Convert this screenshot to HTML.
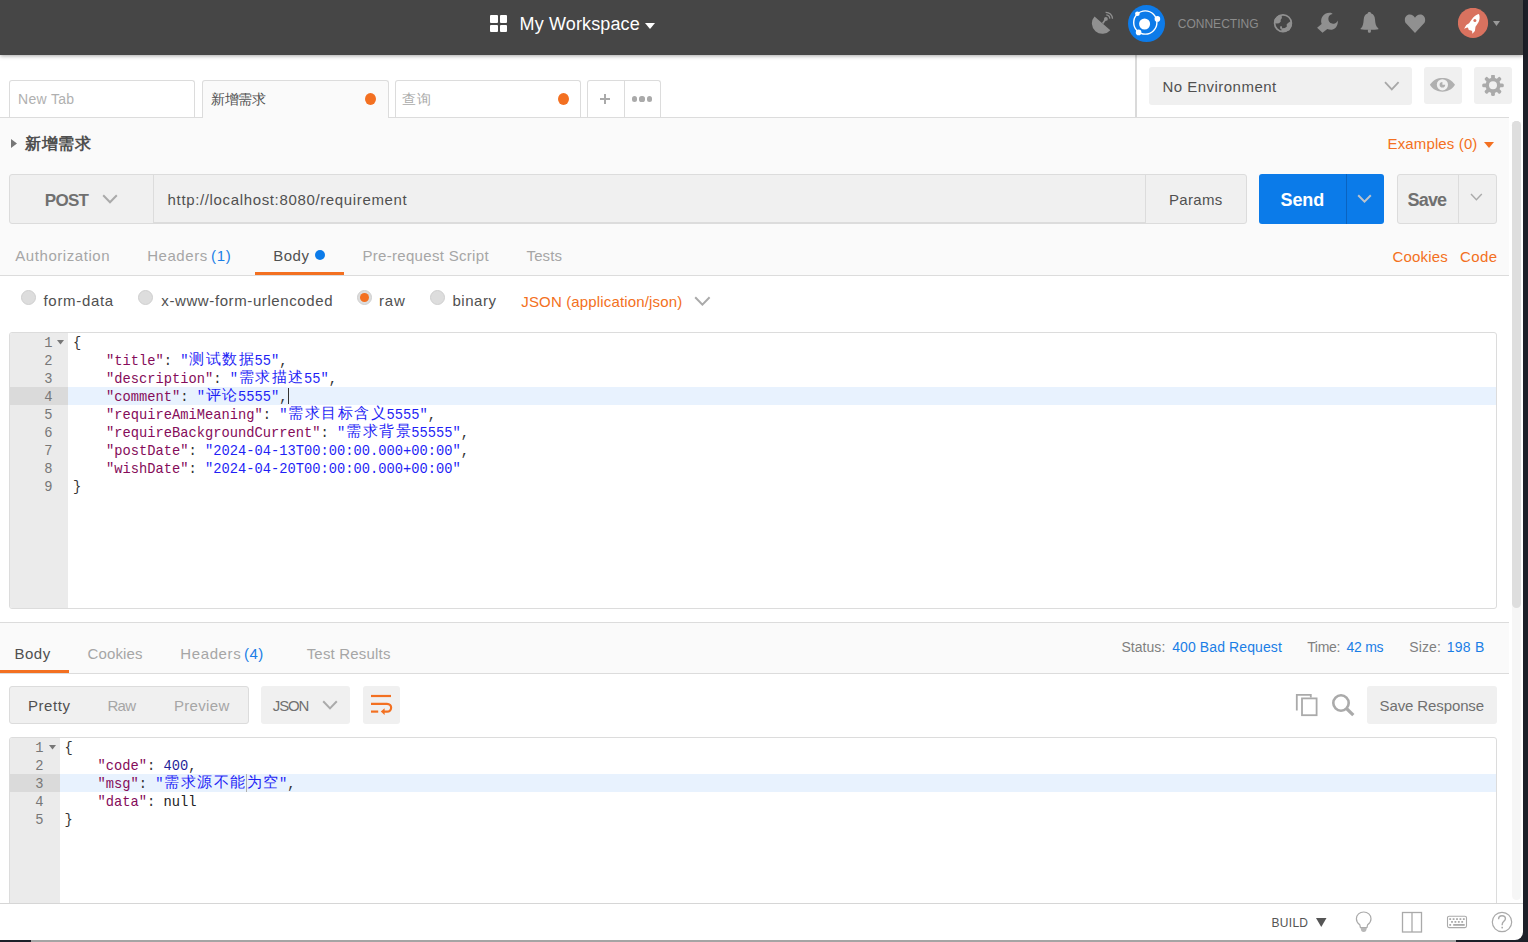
<!DOCTYPE html>
<html><head><meta charset="utf-8"><style>
html,body{margin:0;padding:0;width:1528px;height:942px;overflow:hidden;background:#fff;font-family:"Liberation Sans",sans-serif}
</style></head><body>
<div style="position:absolute;left:0px;top:0px;width:1528px;height:942px;background:#ffffff"></div><div style="position:absolute;left:1523px;top:0px;width:5px;height:942px;background:#1d2029"></div><div style="position:absolute;left:0px;top:0px;width:1523px;height:54.8px;background:#464646;box-shadow:0 1px 4px rgba(0,0,0,.35);z-index:2"></div><div style="position:absolute;left:490px;top:15px;width:7.5px;height:7.5px;background:#fff;border-radius:1px;z-index:3"></div><div style="position:absolute;left:499.5px;top:15px;width:7.5px;height:7.5px;background:#fff;border-radius:1px;z-index:3"></div><div style="position:absolute;left:490px;top:24.5px;width:7.5px;height:7.5px;background:#fff;border-radius:1px;z-index:3"></div><div style="position:absolute;left:499.5px;top:24.5px;width:7.5px;height:7.5px;background:#fff;border-radius:1px;z-index:3"></div><div style="position:absolute;left:519.60px;top:14.86px;font-family:'Liberation Sans', sans-serif;font-size:18px;font-weight:400;line-height:18px;letter-spacing:0.127px;white-space:pre;color:#ffffff;z-index:3">My Workspace</div><svg style="z-index:3;position:absolute;left:645px;top:23px" width="10" height="6" viewBox="0 0 10 6"><path d="M0 0H10L5 6Z" fill="#fff"/></svg><div style="position:absolute;left:1177.70px;top:17.84px;font-family:'Liberation Sans', sans-serif;font-size:12px;font-weight:400;line-height:12px;letter-spacing:0.022px;white-space:pre;color:#8c8c8c;z-index:3">CONNECTING</div><svg style="z-index:3;position:absolute;left:1090px;top:10px" width="26" height="26" viewBox="0 0 26 26"><path d="M4.5 6.4 L20.3 20.3 A10.5 10.5 0 0 1 4.5 6.4 Z" fill="#909090"/><path d="M12.6 13.4 L15.8 9" stroke="#909090" stroke-width="1.7"/><circle cx="15.9" cy="8.9" r="1.9" fill="#909090"/><path d="M16.3 4.9 A3.9 3.9 0 0 1 19.8 8.6" stroke="#909090" stroke-width="1.3" fill="none"/><path d="M15.6 2.3 A6.6 6.6 0 0 1 22.5 8.8" stroke="#909090" stroke-width="1.3" fill="none"/></svg><svg style="z-index:3;position:absolute;left:1128px;top:5px" width="38" height="38" viewBox="0 0 38 38"><circle cx="18.5" cy="18.6" r="18.5" fill="#0d7be9"/><circle cx="16.6" cy="19" r="5.5" fill="#fff"/><circle cx="17.3" cy="17.5" r="11.6" fill="none" stroke="#fff" stroke-width="1.4"/><circle cx="9.4" cy="8.7" r="2.3" fill="#fff"/><circle cx="29.4" cy="13.9" r="2.8" fill="#fff"/><circle cx="10.6" cy="27.4" r="2.8" fill="#fff"/></svg><svg style="z-index:3;position:absolute;left:1273px;top:13px" width="20" height="20" viewBox="0 0 20 20"><circle cx="10" cy="10.2" r="8.4" fill="none" stroke="#909090" stroke-width="1.7"/><path d="M1.6 6.1 L5.3 2.5 L8.6 2.1 L8.9 5 L7.6 6.9 L7.8 8.6 L6.1 10.3 L3.9 10.5 L1.4 10.3 Z" fill="#909090"/><path d="M17.6 8.2 L15 10 L13.6 11.4 L13.9 13.6 L11.9 15 L9.2 15.2 L8 16.9 L9.4 18.8 L16.3 17.4 L18.8 12.5 Z" fill="#909090"/><path d="M6.9 13.6 L8.9 13.3 L9.2 15.8 L7.5 16.3 Z" fill="#909090"/></svg><svg style="z-index:3;position:absolute;left:1316px;top:12px" width="24" height="24" viewBox="0 0 24 24"><path d="M1.1 15.7 L5.6 11.9 C4.0 6.8 7.0 0.8 13.6 0.8 C14.9 0.8 16 1.2 16.7 1.9 A4.9 4.9 0 1 0 21.8 8.6 C22.3 14.2 18.6 18 15.2 17.8 C13.6 17.8 12.4 17.5 11.3 17 L6.5 20.8 Z" fill="#909090"/></svg><svg style="z-index:3;position:absolute;left:1360px;top:11px" width="19" height="23" viewBox="0 0 19 23"><path d="M9.3 0.9 C10.6 0.9 11 1.6 11.2 2.6 C13.8 3.4 14.8 5.5 15 8.5 C15.3 12.5 15.8 15.5 18.4 17.6 L18.4 18.3 C14.5 19 4.5 19 0.6 18.3 L0.6 17.6 C3 15.6 3.4 12.5 3.7 8.5 C4 5.3 5.2 3.4 7.6 2.6 C7.8 1.5 8.2 0.9 9.3 0.9 Z" fill="#909090"/><path d="M7.9 18.2 H10.9 V20.6 C10.9 22.3 7.9 22.3 7.9 20.6 Z" fill="#909090"/></svg><svg style="z-index:3;position:absolute;left:1404px;top:13.6px" width="22" height="20" viewBox="0 0 22 20"><path d="M11 19 L2.2 9.6 C-0.5 6.6 0.9 0.6 5.8 0.6 C8.3 0.6 10 2.3 11 3.8 C12 2.3 13.7 0.6 16.2 0.6 C21.1 0.6 22.5 6.6 19.8 9.6 Z" fill="#909090"/></svg><svg style="z-index:3;position:absolute;left:1458px;top:8px" width="31" height="31" viewBox="0 0 31 31"><circle cx="15" cy="14.9" r="15.1" fill="#d9725f"/><path d="M20.9 6.1 C21.9 8 21.8 11 21 13 C20.4 14.6 19.3 16.4 17.5 18.8 L16.9 23 L14.4 25.7 L14.1 23 L13 22.4 L10.8 21.9 L10 19.7 L9.2 19.4 L6.1 20.8 L8.3 16.9 L11.1 15.2 L13 12.5 C14 10.8 15 9.5 15.8 8.9 C17.2 7.6 18.6 6.8 20.9 6.1 Z" fill="#fff"/><circle cx="16.9" cy="12.4" r="1.5" fill="#d9725f"/></svg><svg style="z-index:3;position:absolute;left:1493px;top:21px" width="7" height="5" viewBox="0 0 7 5"><path d="M0 0H7L3.5 5Z" fill="#9a9a9a"/></svg><div style="position:absolute;left:0px;top:54px;width:1523px;height:63px;background:#fff"></div><div style="position:absolute;left:0px;top:117px;width:1509px;height:1px;background:#dcdcdc"></div><div style="position:absolute;left:9px;top:80px;width:186px;height:37px;box-sizing:border-box;border:1px solid #dcdcdc;border-bottom:none;border-radius:3px 3px 0 0;background:#fff"></div><div style="position:absolute;left:18.00px;top:92.15px;font-family:'Liberation Sans', sans-serif;font-size:14px;font-weight:400;line-height:14px;letter-spacing:0.317px;white-space:pre;color:#b0b0b0;">New Tab</div><div style="position:absolute;left:201.5px;top:80px;width:187px;height:38px;box-sizing:border-box;border:1px solid #dcdcdc;border-bottom:none;border-radius:3px 3px 0 0;background:#fafafa;z-index:1"></div><div style="position:absolute;left:210.90px;top:92.15px;font-family:'Liberation Sans', sans-serif;font-size:14px;font-weight:400;line-height:14px;letter-spacing:-0.367px;white-space:pre;color:#505050;z-index:2">新增需求</div><div style="position:absolute;left:365px;top:93px;width:11px;height:12px;background:#f37021;border-radius:50%;z-index:2"></div><div style="position:absolute;left:394.5px;top:80px;width:186px;height:37px;box-sizing:border-box;border:1px solid #dcdcdc;border-bottom:none;border-radius:3px 3px 0 0;background:#fff"></div><div style="position:absolute;left:402.00px;top:92.15px;font-family:'Liberation Sans', sans-serif;font-size:14px;font-weight:400;line-height:14px;letter-spacing:0.700px;white-space:pre;color:#aaaaaa;">查询</div><div style="position:absolute;left:558px;top:93px;width:11px;height:12px;background:#f37021;border-radius:50%"></div><div style="position:absolute;left:586.5px;top:80px;width:74px;height:37px;box-sizing:border-box;border:1px solid #dcdcdc;border-bottom:none;border-radius:3px 3px 0 0;background:#fff"></div><div style="position:absolute;left:624px;top:80px;width:1px;height:37px;background:#dcdcdc"></div><div style="position:absolute;left:600px;top:98px;width:10px;height:2px;background:#aaa"></div><div style="position:absolute;left:604px;top:94px;width:2px;height:10px;background:#aaa"></div><div style="position:absolute;left:631.9px;top:96.4px;width:5.2px;height:5.2px;background:#aaa;border-radius:50%"></div><div style="position:absolute;left:639.4px;top:96.4px;width:5.2px;height:5.2px;background:#aaa;border-radius:50%"></div><div style="position:absolute;left:646.9px;top:96.4px;width:5.2px;height:5.2px;background:#aaa;border-radius:50%"></div><div style="position:absolute;left:1135.3px;top:54px;width:1.7px;height:63px;background:#dadada"></div><div style="position:absolute;left:1149px;top:67px;width:262.5px;height:37.7px;background:#f0f0f0;border-radius:3px"></div><div style="position:absolute;left:1162.40px;top:79.10px;font-family:'Liberation Sans', sans-serif;font-size:15px;font-weight:400;line-height:15px;letter-spacing:0.485px;white-space:pre;color:#505050;">No Environment</div><svg style="position:absolute;left:1384px;top:81px" width="16" height="10" viewBox="0 0 16 10"><path d="M1 1.2 L7.8 8.4 L14.6 1.2" stroke="#a8a8a8" stroke-width="1.8" fill="none"/></svg><div style="position:absolute;left:1424px;top:67px;width:38px;height:37px;background:#f0f0f0;border-radius:3px"></div><svg style="position:absolute;left:1429px;top:77px" width="27" height="15" viewBox="0 0 27 15"><path d="M0.9 7.8 C4 2.8 8.5 0.9 13.4 0.9 C18.3 0.9 22.8 2.8 26 7.8 C22.8 12.8 18.3 14.7 13.4 14.7 C8.5 14.7 4 12.8 0.9 7.8 Z" fill="#b0b0b0"/><circle cx="13.4" cy="7.8" r="5.6" fill="#f0f0f0"/><path d="M13.4 7.8 V5 A2.8 2.8 0 1 0 16.2 7.8 Z" fill="#b0b0b0"/></svg><div style="position:absolute;left:1474px;top:67px;width:38px;height:37px;background:#f0f0f0;border-radius:3px"></div><svg style="position:absolute;left:1482px;top:75px" width="22" height="22" viewBox="0 0 22 22"><rect x="9.1" y="-0.5" width="3.8" height="6" rx="1.5" fill="#aaa" transform="rotate(0 11 10.3)"/><rect x="9.1" y="-0.5" width="3.8" height="6" rx="1.5" fill="#aaa" transform="rotate(45 11 10.3)"/><rect x="9.1" y="-0.5" width="3.8" height="6" rx="1.5" fill="#aaa" transform="rotate(90 11 10.3)"/><rect x="9.1" y="-0.5" width="3.8" height="6" rx="1.5" fill="#aaa" transform="rotate(135 11 10.3)"/><rect x="9.1" y="-0.5" width="3.8" height="6" rx="1.5" fill="#aaa" transform="rotate(180 11 10.3)"/><rect x="9.1" y="-0.5" width="3.8" height="6" rx="1.5" fill="#aaa" transform="rotate(225 11 10.3)"/><rect x="9.1" y="-0.5" width="3.8" height="6" rx="1.5" fill="#aaa" transform="rotate(270 11 10.3)"/><rect x="9.1" y="-0.5" width="3.8" height="6" rx="1.5" fill="#aaa" transform="rotate(315 11 10.3)"/><circle cx="11" cy="10.3" r="7.6" fill="#aaa"/><circle cx="11" cy="10.3" r="4" fill="#f0f0f0"/></svg><div style="position:absolute;left:0px;top:118px;width:1509px;height:157px;background:#fafafa"></div><div style="position:absolute;left:1509px;top:118px;width:14px;height:822px;background:#fff"></div><div style="position:absolute;left:1512px;top:121px;width:9px;height:486.5px;background:#dedede;border-radius:4.5px"></div><div style="position:absolute;left:1512px;top:598px;width:9px;height:301.6px;background:#f6f6f6;border-radius:0 0 4.5px 4.5px;z-index:0"></div><div style="position:absolute;left:1512px;top:121px;width:9px;height:486.5px;background:#dedede;border-radius:4.5px;z-index:1"></div><svg style="position:absolute;left:11px;top:139px" width="6" height="9" viewBox="0 0 6 9"><path d="M0 0 L6 4.5 L0 9 Z" fill="#777"/></svg><div style="position:absolute;left:25.00px;top:136.46px;font-family:'Liberation Sans', sans-serif;font-size:16px;font-weight:700;line-height:16px;letter-spacing:0.667px;white-space:pre;color:#505050;">新增需求</div><div style="position:absolute;left:1387.60px;top:136.30px;font-family:'Liberation Sans', sans-serif;font-size:15px;font-weight:400;line-height:15px;letter-spacing:0.127px;white-space:pre;color:#f37021;">Examples (0)</div><svg style="position:absolute;left:1484px;top:142px" width="10" height="6" viewBox="0 0 10 6"><path d="M0 0H10L5 6Z" fill="#f37021"/></svg><div style="position:absolute;left:9px;top:174px;width:1237.5px;height:49.5px;box-sizing:border-box;border:1px solid #dcdcdc;border-radius:3px;background:#f0f0f0"></div><div style="position:absolute;left:153px;top:174px;width:1px;height:49.5px;background:#dcdcdc"></div><div style="position:absolute;left:1145px;top:174px;width:1px;height:49.5px;background:#dcdcdc"></div><div style="position:absolute;left:154px;top:221.5px;width:991px;height:1.5px;background:#dcdcdc"></div><div style="position:absolute;left:44.80px;top:191.61px;font-family:'Liberation Sans', sans-serif;font-size:17px;font-weight:700;line-height:17px;letter-spacing:-0.700px;white-space:pre;color:#707070;">POST</div><svg style="position:absolute;left:102px;top:194px" width="16" height="10" viewBox="0 0 16 10"><path d="M1.2 1.2 L8 8.2 L14.8 1.2" stroke="#aaa" stroke-width="2" fill="none"/></svg><div style="position:absolute;left:167.60px;top:192.00px;font-family:'Liberation Sans', sans-serif;font-size:15px;font-weight:400;line-height:15px;letter-spacing:0.644px;white-space:pre;color:#505050;">http://localhost:8080/requirement</div><div style="position:absolute;left:1168.90px;top:192.30px;font-family:'Liberation Sans', sans-serif;font-size:15px;font-weight:400;line-height:15px;letter-spacing:0.360px;white-space:pre;color:#505050;">Params</div><div style="position:absolute;left:1259px;top:174px;width:125px;height:50px;background:#0b7be9;border-radius:3px"></div><div style="position:absolute;left:1346px;top:174px;width:1px;height:50px;background:#0a63c0"></div><div style="position:absolute;left:1280.50px;top:190.56px;font-family:'Liberation Sans', sans-serif;font-size:18px;font-weight:700;line-height:18px;letter-spacing:-0.100px;white-space:pre;color:#ffffff;">Send</div><svg style="position:absolute;left:1357px;top:194px" width="15" height="9" viewBox="0 0 15 9"><path d="M1.2 1.2 L7.5 7.6 L13.8 1.2" stroke="#bcc3cc" stroke-width="2" fill="none"/></svg><div style="position:absolute;left:1397px;top:174px;width:100px;height:50px;box-sizing:border-box;border:1px solid #dcdcdc;border-radius:3px;background:#f0f0f0"></div><div style="position:absolute;left:1458px;top:174px;width:1px;height:50px;background:#dcdcdc"></div><div style="position:absolute;left:1407.60px;top:190.56px;font-family:'Liberation Sans', sans-serif;font-size:18px;font-weight:700;line-height:18px;letter-spacing:-0.867px;white-space:pre;color:#707070;">Save</div><svg style="position:absolute;left:1470px;top:193px" width="13" height="9" viewBox="0 0 13 9"><path d="M1 1 L6.4 6.8 L11.8 1" stroke="#aaa" stroke-width="1.4" fill="none"/></svg><div style="position:absolute;left:15.30px;top:248.40px;font-family:'Liberation Sans', sans-serif;font-size:15px;font-weight:400;line-height:15px;letter-spacing:0.558px;white-space:pre;color:#a6a6a6;">Authorization</div><div style="position:absolute;left:147.20px;top:248.40px;font-family:'Liberation Sans', sans-serif;font-size:15px;font-weight:400;line-height:15px;letter-spacing:0.550px;white-space:pre;color:#a6a6a6;">Headers</div><div style="position:absolute;left:211.00px;top:248.40px;font-family:'Liberation Sans', sans-serif;font-size:15px;font-weight:400;line-height:15px;letter-spacing:0.650px;white-space:pre;color:#1a7ee6;">(1)</div><div style="position:absolute;left:273.20px;top:248.40px;font-family:'Liberation Sans', sans-serif;font-size:15px;font-weight:400;line-height:15px;letter-spacing:0.500px;white-space:pre;color:#505050;">Body</div><div style="position:absolute;left:315px;top:250px;width:10px;height:10px;background:#0b7be9;border-radius:50%"></div><div style="position:absolute;left:362.40px;top:248.40px;font-family:'Liberation Sans', sans-serif;font-size:15px;font-weight:400;line-height:15px;letter-spacing:0.312px;white-space:pre;color:#a6a6a6;">Pre-request Script</div><div style="position:absolute;left:526.50px;top:248.40px;font-family:'Liberation Sans', sans-serif;font-size:15px;font-weight:400;line-height:15px;letter-spacing:0.125px;white-space:pre;color:#a6a6a6;">Tests</div><div style="position:absolute;left:1392.60px;top:249.40px;font-family:'Liberation Sans', sans-serif;font-size:15px;font-weight:400;line-height:15px;letter-spacing:0.167px;white-space:pre;color:#f37021;">Cookies</div><div style="position:absolute;left:1460.00px;top:249.40px;font-family:'Liberation Sans', sans-serif;font-size:15px;font-weight:400;line-height:15px;letter-spacing:0.400px;white-space:pre;color:#f37021;">Code</div><div style="position:absolute;left:255px;top:272px;width:89px;height:3px;background:#f37021"></div><div style="position:absolute;left:0px;top:275px;width:1509px;height:1px;background:#dcdcdc"></div><div style="position:absolute;left:0px;top:276px;width:1509px;height:346px;background:#fff"></div><div style="position:absolute;left:21px;top:290px;width:15px;height:15px;box-sizing:border-box;border:1px solid #cfcfcf;border-radius:50%;background:#dddddd"></div><div style="position:absolute;left:43.50px;top:293.00px;font-family:'Liberation Sans', sans-serif;font-size:15px;font-weight:400;line-height:15px;letter-spacing:0.688px;white-space:pre;color:#505050;">form-data</div><div style="position:absolute;left:138px;top:290px;width:15px;height:15px;box-sizing:border-box;border:1px solid #cfcfcf;border-radius:50%;background:#dddddd"></div><div style="position:absolute;left:161.30px;top:293.00px;font-family:'Liberation Sans', sans-serif;font-size:15px;font-weight:400;line-height:15px;letter-spacing:0.600px;white-space:pre;color:#505050;">x-www-form-urlencoded</div><div style="position:absolute;left:357px;top:290px;width:15px;height:15px;box-sizing:border-box;border:1px solid #cfcfcf;border-radius:50%;background:#dddddd"></div><div style="position:absolute;left:360px;top:293px;width:9px;height:9px;background:#f37021;border-radius:50%"></div><div style="position:absolute;left:379.00px;top:293.00px;font-family:'Liberation Sans', sans-serif;font-size:15px;font-weight:400;line-height:15px;letter-spacing:0.800px;white-space:pre;color:#505050;">raw</div><div style="position:absolute;left:430px;top:290px;width:15px;height:15px;box-sizing:border-box;border:1px solid #cfcfcf;border-radius:50%;background:#dddddd"></div><div style="position:absolute;left:452.40px;top:293.00px;font-family:'Liberation Sans', sans-serif;font-size:15px;font-weight:400;line-height:15px;letter-spacing:0.560px;white-space:pre;color:#505050;">binary</div><div style="position:absolute;left:521.30px;top:294.00px;font-family:'Liberation Sans', sans-serif;font-size:15px;font-weight:400;line-height:15px;letter-spacing:0.150px;white-space:pre;color:#f37021;">JSON (application/json)</div><svg style="position:absolute;left:694px;top:296px" width="17" height="10" viewBox="0 0 17 10"><path d="M1.2 1.2 L8.4 8.6 L15.6 1.2" stroke="#aaa" stroke-width="2" fill="none"/></svg><div style="position:absolute;left:9px;top:332px;width:1488px;height:277px;box-sizing:border-box;border:1px solid #dcdcdc;border-radius:3px;background:#fff;overflow:hidden"></div><div style="position:absolute;left:10px;top:333px;width:58px;height:275px;background:#ebebeb;border-radius:2px 0 0 2px"></div><div style="position:absolute;left:10px;top:387px;width:58px;height:18px;background:#dadada"></div><div style="position:absolute;left:68px;top:387px;width:1428px;height:18px;background:#e8f2fe"></div><div style="position:absolute;left:12.50px;top:335.00px;width:40px;text-align:right;font-family:'Liberation Mono', monospace;font-size:13.75px;line-height:18px;color:#777">1</div><div style="position:absolute;left:73.00px;top:335.00px;height:18px;width:1400px;font-family:'Liberation Mono', monospace;font-size:13.75px;line-height:18px;white-space:pre"><span style="position:absolute;left:0.00px;top:0;color:#333333">{</span></div><div style="position:absolute;left:12.50px;top:353.00px;width:40px;text-align:right;font-family:'Liberation Mono', monospace;font-size:13.75px;line-height:18px;color:#777">2</div><div style="position:absolute;left:73.00px;top:353.00px;height:18px;width:1400px;font-family:'Liberation Mono', monospace;font-size:13.75px;line-height:18px;white-space:pre"><span style="position:absolute;left:33.00px;top:0;color:#850c5a">&quot;</span><span style="position:absolute;left:41.25px;top:0;color:#850c5a">t</span><span style="position:absolute;left:49.50px;top:0;color:#850c5a">i</span><span style="position:absolute;left:57.75px;top:0;color:#850c5a">t</span><span style="position:absolute;left:66.00px;top:0;color:#850c5a">l</span><span style="position:absolute;left:74.25px;top:0;color:#850c5a">e</span><span style="position:absolute;left:82.50px;top:0;color:#850c5a">&quot;</span><span style="position:absolute;left:90.75px;top:0;color:#333333">:</span><span style="position:absolute;left:107.25px;top:0;color:#1f1ff5">&quot;</span><span style="position:absolute;left:115.50px;top:-1px;width:16.50px;text-align:center;color:#1f1ff5;font-size:15px">测</span><span style="position:absolute;left:132.00px;top:-1px;width:16.50px;text-align:center;color:#1f1ff5;font-size:15px">试</span><span style="position:absolute;left:148.50px;top:-1px;width:16.50px;text-align:center;color:#1f1ff5;font-size:15px">数</span><span style="position:absolute;left:165.00px;top:-1px;width:16.50px;text-align:center;color:#1f1ff5;font-size:15px">据</span><span style="position:absolute;left:181.50px;top:0;color:#1f1ff5">5</span><span style="position:absolute;left:189.75px;top:0;color:#1f1ff5">5</span><span style="position:absolute;left:198.00px;top:0;color:#1f1ff5">&quot;</span><span style="position:absolute;left:206.25px;top:0;color:#333333">,</span></div><div style="position:absolute;left:12.50px;top:371.00px;width:40px;text-align:right;font-family:'Liberation Mono', monospace;font-size:13.75px;line-height:18px;color:#777">3</div><div style="position:absolute;left:73.00px;top:371.00px;height:18px;width:1400px;font-family:'Liberation Mono', monospace;font-size:13.75px;line-height:18px;white-space:pre"><span style="position:absolute;left:33.00px;top:0;color:#850c5a">&quot;</span><span style="position:absolute;left:41.25px;top:0;color:#850c5a">d</span><span style="position:absolute;left:49.50px;top:0;color:#850c5a">e</span><span style="position:absolute;left:57.75px;top:0;color:#850c5a">s</span><span style="position:absolute;left:66.00px;top:0;color:#850c5a">c</span><span style="position:absolute;left:74.25px;top:0;color:#850c5a">r</span><span style="position:absolute;left:82.50px;top:0;color:#850c5a">i</span><span style="position:absolute;left:90.75px;top:0;color:#850c5a">p</span><span style="position:absolute;left:99.00px;top:0;color:#850c5a">t</span><span style="position:absolute;left:107.25px;top:0;color:#850c5a">i</span><span style="position:absolute;left:115.50px;top:0;color:#850c5a">o</span><span style="position:absolute;left:123.75px;top:0;color:#850c5a">n</span><span style="position:absolute;left:132.00px;top:0;color:#850c5a">&quot;</span><span style="position:absolute;left:140.25px;top:0;color:#333333">:</span><span style="position:absolute;left:156.75px;top:0;color:#1f1ff5">&quot;</span><span style="position:absolute;left:165.00px;top:-1px;width:16.50px;text-align:center;color:#1f1ff5;font-size:15px">需</span><span style="position:absolute;left:181.50px;top:-1px;width:16.50px;text-align:center;color:#1f1ff5;font-size:15px">求</span><span style="position:absolute;left:198.00px;top:-1px;width:16.50px;text-align:center;color:#1f1ff5;font-size:15px">描</span><span style="position:absolute;left:214.50px;top:-1px;width:16.50px;text-align:center;color:#1f1ff5;font-size:15px">述</span><span style="position:absolute;left:231.00px;top:0;color:#1f1ff5">5</span><span style="position:absolute;left:239.25px;top:0;color:#1f1ff5">5</span><span style="position:absolute;left:247.50px;top:0;color:#1f1ff5">&quot;</span><span style="position:absolute;left:255.75px;top:0;color:#333333">,</span></div><div style="position:absolute;left:12.50px;top:389.00px;width:40px;text-align:right;font-family:'Liberation Mono', monospace;font-size:13.75px;line-height:18px;color:#777">4</div><div style="position:absolute;left:73.00px;top:389.00px;height:18px;width:1400px;font-family:'Liberation Mono', monospace;font-size:13.75px;line-height:18px;white-space:pre"><span style="position:absolute;left:33.00px;top:0;color:#850c5a">&quot;</span><span style="position:absolute;left:41.25px;top:0;color:#850c5a">c</span><span style="position:absolute;left:49.50px;top:0;color:#850c5a">o</span><span style="position:absolute;left:57.75px;top:0;color:#850c5a">m</span><span style="position:absolute;left:66.00px;top:0;color:#850c5a">m</span><span style="position:absolute;left:74.25px;top:0;color:#850c5a">e</span><span style="position:absolute;left:82.50px;top:0;color:#850c5a">n</span><span style="position:absolute;left:90.75px;top:0;color:#850c5a">t</span><span style="position:absolute;left:99.00px;top:0;color:#850c5a">&quot;</span><span style="position:absolute;left:107.25px;top:0;color:#333333">:</span><span style="position:absolute;left:123.75px;top:0;color:#1f1ff5">&quot;</span><span style="position:absolute;left:132.00px;top:-1px;width:16.50px;text-align:center;color:#1f1ff5;font-size:15px">评</span><span style="position:absolute;left:148.50px;top:-1px;width:16.50px;text-align:center;color:#1f1ff5;font-size:15px">论</span><span style="position:absolute;left:165.00px;top:0;color:#1f1ff5">5</span><span style="position:absolute;left:173.25px;top:0;color:#1f1ff5">5</span><span style="position:absolute;left:181.50px;top:0;color:#1f1ff5">5</span><span style="position:absolute;left:189.75px;top:0;color:#1f1ff5">5</span><span style="position:absolute;left:198.00px;top:0;color:#1f1ff5">&quot;</span><span style="position:absolute;left:206.25px;top:0;color:#333333">,</span></div><div style="position:absolute;left:12.50px;top:407.00px;width:40px;text-align:right;font-family:'Liberation Mono', monospace;font-size:13.75px;line-height:18px;color:#777">5</div><div style="position:absolute;left:73.00px;top:407.00px;height:18px;width:1400px;font-family:'Liberation Mono', monospace;font-size:13.75px;line-height:18px;white-space:pre"><span style="position:absolute;left:33.00px;top:0;color:#850c5a">&quot;</span><span style="position:absolute;left:41.25px;top:0;color:#850c5a">r</span><span style="position:absolute;left:49.50px;top:0;color:#850c5a">e</span><span style="position:absolute;left:57.75px;top:0;color:#850c5a">q</span><span style="position:absolute;left:66.00px;top:0;color:#850c5a">u</span><span style="position:absolute;left:74.25px;top:0;color:#850c5a">i</span><span style="position:absolute;left:82.50px;top:0;color:#850c5a">r</span><span style="position:absolute;left:90.75px;top:0;color:#850c5a">e</span><span style="position:absolute;left:99.00px;top:0;color:#850c5a">A</span><span style="position:absolute;left:107.25px;top:0;color:#850c5a">m</span><span style="position:absolute;left:115.50px;top:0;color:#850c5a">i</span><span style="position:absolute;left:123.75px;top:0;color:#850c5a">M</span><span style="position:absolute;left:132.00px;top:0;color:#850c5a">e</span><span style="position:absolute;left:140.25px;top:0;color:#850c5a">a</span><span style="position:absolute;left:148.50px;top:0;color:#850c5a">n</span><span style="position:absolute;left:156.75px;top:0;color:#850c5a">i</span><span style="position:absolute;left:165.00px;top:0;color:#850c5a">n</span><span style="position:absolute;left:173.25px;top:0;color:#850c5a">g</span><span style="position:absolute;left:181.50px;top:0;color:#850c5a">&quot;</span><span style="position:absolute;left:189.75px;top:0;color:#333333">:</span><span style="position:absolute;left:206.25px;top:0;color:#1f1ff5">&quot;</span><span style="position:absolute;left:214.50px;top:-1px;width:16.50px;text-align:center;color:#1f1ff5;font-size:15px">需</span><span style="position:absolute;left:231.00px;top:-1px;width:16.50px;text-align:center;color:#1f1ff5;font-size:15px">求</span><span style="position:absolute;left:247.50px;top:-1px;width:16.50px;text-align:center;color:#1f1ff5;font-size:15px">目</span><span style="position:absolute;left:264.00px;top:-1px;width:16.50px;text-align:center;color:#1f1ff5;font-size:15px">标</span><span style="position:absolute;left:280.50px;top:-1px;width:16.50px;text-align:center;color:#1f1ff5;font-size:15px">含</span><span style="position:absolute;left:297.00px;top:-1px;width:16.50px;text-align:center;color:#1f1ff5;font-size:15px">义</span><span style="position:absolute;left:313.50px;top:0;color:#1f1ff5">5</span><span style="position:absolute;left:321.75px;top:0;color:#1f1ff5">5</span><span style="position:absolute;left:330.00px;top:0;color:#1f1ff5">5</span><span style="position:absolute;left:338.25px;top:0;color:#1f1ff5">5</span><span style="position:absolute;left:346.50px;top:0;color:#1f1ff5">&quot;</span><span style="position:absolute;left:354.75px;top:0;color:#333333">,</span></div><div style="position:absolute;left:12.50px;top:425.00px;width:40px;text-align:right;font-family:'Liberation Mono', monospace;font-size:13.75px;line-height:18px;color:#777">6</div><div style="position:absolute;left:73.00px;top:425.00px;height:18px;width:1400px;font-family:'Liberation Mono', monospace;font-size:13.75px;line-height:18px;white-space:pre"><span style="position:absolute;left:33.00px;top:0;color:#850c5a">&quot;</span><span style="position:absolute;left:41.25px;top:0;color:#850c5a">r</span><span style="position:absolute;left:49.50px;top:0;color:#850c5a">e</span><span style="position:absolute;left:57.75px;top:0;color:#850c5a">q</span><span style="position:absolute;left:66.00px;top:0;color:#850c5a">u</span><span style="position:absolute;left:74.25px;top:0;color:#850c5a">i</span><span style="position:absolute;left:82.50px;top:0;color:#850c5a">r</span><span style="position:absolute;left:90.75px;top:0;color:#850c5a">e</span><span style="position:absolute;left:99.00px;top:0;color:#850c5a">B</span><span style="position:absolute;left:107.25px;top:0;color:#850c5a">a</span><span style="position:absolute;left:115.50px;top:0;color:#850c5a">c</span><span style="position:absolute;left:123.75px;top:0;color:#850c5a">k</span><span style="position:absolute;left:132.00px;top:0;color:#850c5a">g</span><span style="position:absolute;left:140.25px;top:0;color:#850c5a">r</span><span style="position:absolute;left:148.50px;top:0;color:#850c5a">o</span><span style="position:absolute;left:156.75px;top:0;color:#850c5a">u</span><span style="position:absolute;left:165.00px;top:0;color:#850c5a">n</span><span style="position:absolute;left:173.25px;top:0;color:#850c5a">d</span><span style="position:absolute;left:181.50px;top:0;color:#850c5a">C</span><span style="position:absolute;left:189.75px;top:0;color:#850c5a">u</span><span style="position:absolute;left:198.00px;top:0;color:#850c5a">r</span><span style="position:absolute;left:206.25px;top:0;color:#850c5a">r</span><span style="position:absolute;left:214.50px;top:0;color:#850c5a">e</span><span style="position:absolute;left:222.75px;top:0;color:#850c5a">n</span><span style="position:absolute;left:231.00px;top:0;color:#850c5a">t</span><span style="position:absolute;left:239.25px;top:0;color:#850c5a">&quot;</span><span style="position:absolute;left:247.50px;top:0;color:#333333">:</span><span style="position:absolute;left:264.00px;top:0;color:#1f1ff5">&quot;</span><span style="position:absolute;left:272.25px;top:-1px;width:16.50px;text-align:center;color:#1f1ff5;font-size:15px">需</span><span style="position:absolute;left:288.75px;top:-1px;width:16.50px;text-align:center;color:#1f1ff5;font-size:15px">求</span><span style="position:absolute;left:305.25px;top:-1px;width:16.50px;text-align:center;color:#1f1ff5;font-size:15px">背</span><span style="position:absolute;left:321.75px;top:-1px;width:16.50px;text-align:center;color:#1f1ff5;font-size:15px">景</span><span style="position:absolute;left:338.25px;top:0;color:#1f1ff5">5</span><span style="position:absolute;left:346.50px;top:0;color:#1f1ff5">5</span><span style="position:absolute;left:354.75px;top:0;color:#1f1ff5">5</span><span style="position:absolute;left:363.00px;top:0;color:#1f1ff5">5</span><span style="position:absolute;left:371.25px;top:0;color:#1f1ff5">5</span><span style="position:absolute;left:379.50px;top:0;color:#1f1ff5">&quot;</span><span style="position:absolute;left:387.75px;top:0;color:#333333">,</span></div><div style="position:absolute;left:12.50px;top:443.00px;width:40px;text-align:right;font-family:'Liberation Mono', monospace;font-size:13.75px;line-height:18px;color:#777">7</div><div style="position:absolute;left:73.00px;top:443.00px;height:18px;width:1400px;font-family:'Liberation Mono', monospace;font-size:13.75px;line-height:18px;white-space:pre"><span style="position:absolute;left:33.00px;top:0;color:#850c5a">&quot;</span><span style="position:absolute;left:41.25px;top:0;color:#850c5a">p</span><span style="position:absolute;left:49.50px;top:0;color:#850c5a">o</span><span style="position:absolute;left:57.75px;top:0;color:#850c5a">s</span><span style="position:absolute;left:66.00px;top:0;color:#850c5a">t</span><span style="position:absolute;left:74.25px;top:0;color:#850c5a">D</span><span style="position:absolute;left:82.50px;top:0;color:#850c5a">a</span><span style="position:absolute;left:90.75px;top:0;color:#850c5a">t</span><span style="position:absolute;left:99.00px;top:0;color:#850c5a">e</span><span style="position:absolute;left:107.25px;top:0;color:#850c5a">&quot;</span><span style="position:absolute;left:115.50px;top:0;color:#333333">:</span><span style="position:absolute;left:132.00px;top:0;color:#1f1ff5">&quot;</span><span style="position:absolute;left:140.25px;top:0;color:#1f1ff5">2</span><span style="position:absolute;left:148.50px;top:0;color:#1f1ff5">0</span><span style="position:absolute;left:156.75px;top:0;color:#1f1ff5">2</span><span style="position:absolute;left:165.00px;top:0;color:#1f1ff5">4</span><span style="position:absolute;left:173.25px;top:0;color:#1f1ff5">-</span><span style="position:absolute;left:181.50px;top:0;color:#1f1ff5">0</span><span style="position:absolute;left:189.75px;top:0;color:#1f1ff5">4</span><span style="position:absolute;left:198.00px;top:0;color:#1f1ff5">-</span><span style="position:absolute;left:206.25px;top:0;color:#1f1ff5">1</span><span style="position:absolute;left:214.50px;top:0;color:#1f1ff5">3</span><span style="position:absolute;left:222.75px;top:0;color:#1f1ff5">T</span><span style="position:absolute;left:231.00px;top:0;color:#1f1ff5">0</span><span style="position:absolute;left:239.25px;top:0;color:#1f1ff5">0</span><span style="position:absolute;left:247.50px;top:0;color:#1f1ff5">:</span><span style="position:absolute;left:255.75px;top:0;color:#1f1ff5">0</span><span style="position:absolute;left:264.00px;top:0;color:#1f1ff5">0</span><span style="position:absolute;left:272.25px;top:0;color:#1f1ff5">:</span><span style="position:absolute;left:280.50px;top:0;color:#1f1ff5">0</span><span style="position:absolute;left:288.75px;top:0;color:#1f1ff5">0</span><span style="position:absolute;left:297.00px;top:0;color:#1f1ff5">.</span><span style="position:absolute;left:305.25px;top:0;color:#1f1ff5">0</span><span style="position:absolute;left:313.50px;top:0;color:#1f1ff5">0</span><span style="position:absolute;left:321.75px;top:0;color:#1f1ff5">0</span><span style="position:absolute;left:330.00px;top:0;color:#1f1ff5">+</span><span style="position:absolute;left:338.25px;top:0;color:#1f1ff5">0</span><span style="position:absolute;left:346.50px;top:0;color:#1f1ff5">0</span><span style="position:absolute;left:354.75px;top:0;color:#1f1ff5">:</span><span style="position:absolute;left:363.00px;top:0;color:#1f1ff5">0</span><span style="position:absolute;left:371.25px;top:0;color:#1f1ff5">0</span><span style="position:absolute;left:379.50px;top:0;color:#1f1ff5">&quot;</span><span style="position:absolute;left:387.75px;top:0;color:#333333">,</span></div><div style="position:absolute;left:12.50px;top:461.00px;width:40px;text-align:right;font-family:'Liberation Mono', monospace;font-size:13.75px;line-height:18px;color:#777">8</div><div style="position:absolute;left:73.00px;top:461.00px;height:18px;width:1400px;font-family:'Liberation Mono', monospace;font-size:13.75px;line-height:18px;white-space:pre"><span style="position:absolute;left:33.00px;top:0;color:#850c5a">&quot;</span><span style="position:absolute;left:41.25px;top:0;color:#850c5a">w</span><span style="position:absolute;left:49.50px;top:0;color:#850c5a">i</span><span style="position:absolute;left:57.75px;top:0;color:#850c5a">s</span><span style="position:absolute;left:66.00px;top:0;color:#850c5a">h</span><span style="position:absolute;left:74.25px;top:0;color:#850c5a">D</span><span style="position:absolute;left:82.50px;top:0;color:#850c5a">a</span><span style="position:absolute;left:90.75px;top:0;color:#850c5a">t</span><span style="position:absolute;left:99.00px;top:0;color:#850c5a">e</span><span style="position:absolute;left:107.25px;top:0;color:#850c5a">&quot;</span><span style="position:absolute;left:115.50px;top:0;color:#333333">:</span><span style="position:absolute;left:132.00px;top:0;color:#1f1ff5">&quot;</span><span style="position:absolute;left:140.25px;top:0;color:#1f1ff5">2</span><span style="position:absolute;left:148.50px;top:0;color:#1f1ff5">0</span><span style="position:absolute;left:156.75px;top:0;color:#1f1ff5">2</span><span style="position:absolute;left:165.00px;top:0;color:#1f1ff5">4</span><span style="position:absolute;left:173.25px;top:0;color:#1f1ff5">-</span><span style="position:absolute;left:181.50px;top:0;color:#1f1ff5">0</span><span style="position:absolute;left:189.75px;top:0;color:#1f1ff5">4</span><span style="position:absolute;left:198.00px;top:0;color:#1f1ff5">-</span><span style="position:absolute;left:206.25px;top:0;color:#1f1ff5">2</span><span style="position:absolute;left:214.50px;top:0;color:#1f1ff5">0</span><span style="position:absolute;left:222.75px;top:0;color:#1f1ff5">T</span><span style="position:absolute;left:231.00px;top:0;color:#1f1ff5">0</span><span style="position:absolute;left:239.25px;top:0;color:#1f1ff5">0</span><span style="position:absolute;left:247.50px;top:0;color:#1f1ff5">:</span><span style="position:absolute;left:255.75px;top:0;color:#1f1ff5">0</span><span style="position:absolute;left:264.00px;top:0;color:#1f1ff5">0</span><span style="position:absolute;left:272.25px;top:0;color:#1f1ff5">:</span><span style="position:absolute;left:280.50px;top:0;color:#1f1ff5">0</span><span style="position:absolute;left:288.75px;top:0;color:#1f1ff5">0</span><span style="position:absolute;left:297.00px;top:0;color:#1f1ff5">.</span><span style="position:absolute;left:305.25px;top:0;color:#1f1ff5">0</span><span style="position:absolute;left:313.50px;top:0;color:#1f1ff5">0</span><span style="position:absolute;left:321.75px;top:0;color:#1f1ff5">0</span><span style="position:absolute;left:330.00px;top:0;color:#1f1ff5">+</span><span style="position:absolute;left:338.25px;top:0;color:#1f1ff5">0</span><span style="position:absolute;left:346.50px;top:0;color:#1f1ff5">0</span><span style="position:absolute;left:354.75px;top:0;color:#1f1ff5">:</span><span style="position:absolute;left:363.00px;top:0;color:#1f1ff5">0</span><span style="position:absolute;left:371.25px;top:0;color:#1f1ff5">0</span><span style="position:absolute;left:379.50px;top:0;color:#1f1ff5">&quot;</span></div><div style="position:absolute;left:12.50px;top:479.00px;width:40px;text-align:right;font-family:'Liberation Mono', monospace;font-size:13.75px;line-height:18px;color:#777">9</div><div style="position:absolute;left:73.00px;top:479.00px;height:18px;width:1400px;font-family:'Liberation Mono', monospace;font-size:13.75px;line-height:18px;white-space:pre"><span style="position:absolute;left:0.00px;top:0;color:#333333">}</span></div><svg style="position:absolute;left:57px;top:339.5px" width="7" height="5" viewBox="0 0 7 5"><path d="M0 0H7L3.5 4.5Z" fill="#777"/></svg><div style="position:absolute;left:288px;top:388px;width:1px;height:16px;background:#333"></div><div style="position:absolute;left:0px;top:622px;width:1509px;height:1px;background:#dcdcdc"></div><div style="position:absolute;left:0px;top:623px;width:1509px;height:50px;background:#fafafa"></div><div style="position:absolute;left:14.50px;top:646.20px;font-family:'Liberation Sans', sans-serif;font-size:15px;font-weight:400;line-height:15px;letter-spacing:0.500px;white-space:pre;color:#505050;">Body</div><div style="position:absolute;left:87.50px;top:646.20px;font-family:'Liberation Sans', sans-serif;font-size:15px;font-weight:400;line-height:15px;letter-spacing:0.150px;white-space:pre;color:#a6a6a6;">Cookies</div><div style="position:absolute;left:180.30px;top:646.20px;font-family:'Liberation Sans', sans-serif;font-size:15px;font-weight:400;line-height:15px;letter-spacing:0.617px;white-space:pre;color:#a6a6a6;">Headers</div><div style="position:absolute;left:244.10px;top:646.20px;font-family:'Liberation Sans', sans-serif;font-size:15px;font-weight:400;line-height:15px;letter-spacing:0.450px;white-space:pre;color:#1a7ee6;">(4)</div><div style="position:absolute;left:306.70px;top:646.20px;font-family:'Liberation Sans', sans-serif;font-size:15px;font-weight:400;line-height:15px;letter-spacing:0.182px;white-space:pre;color:#a6a6a6;">Test Results</div><div style="position:absolute;left:0px;top:670px;width:69px;height:3px;background:#f37021"></div><div style="position:absolute;left:0px;top:673px;width:1509px;height:1px;background:#dcdcdc"></div><div style="position:absolute;left:1121.40px;top:640.25px;font-family:'Liberation Sans', sans-serif;font-size:14px;font-weight:400;line-height:14px;letter-spacing:0.050px;white-space:pre;color:#808080;">Status:</div><div style="position:absolute;left:1172.20px;top:640.25px;font-family:'Liberation Sans', sans-serif;font-size:14px;font-weight:400;line-height:14px;letter-spacing:0.100px;white-space:pre;color:#1a7ee6;">400 Bad Request</div><div style="position:absolute;left:1307.20px;top:640.25px;font-family:'Liberation Sans', sans-serif;font-size:14px;font-weight:400;line-height:14px;letter-spacing:-0.350px;white-space:pre;color:#808080;">Time:</div><div style="position:absolute;left:1346.40px;top:640.25px;font-family:'Liberation Sans', sans-serif;font-size:14px;font-weight:400;line-height:14px;letter-spacing:-0.225px;white-space:pre;color:#1a7ee6;">42 ms</div><div style="position:absolute;left:1409.30px;top:640.25px;font-family:'Liberation Sans', sans-serif;font-size:14px;font-weight:400;line-height:14px;letter-spacing:0.125px;white-space:pre;color:#808080;">Size:</div><div style="position:absolute;left:1446.80px;top:640.25px;font-family:'Liberation Sans', sans-serif;font-size:14px;font-weight:400;line-height:14px;letter-spacing:0.250px;white-space:pre;color:#1a7ee6;">198 B</div><div style="position:absolute;left:9px;top:686px;width:240px;height:38px;box-sizing:border-box;border:1px solid #dcdcdc;border-radius:3px;background:#f0f0f0"></div><div style="position:absolute;left:27.90px;top:698.30px;font-family:'Liberation Sans', sans-serif;font-size:15px;font-weight:400;line-height:15px;letter-spacing:0.580px;white-space:pre;color:#505050;">Pretty</div><div style="position:absolute;left:107.40px;top:698.30px;font-family:'Liberation Sans', sans-serif;font-size:15px;font-weight:400;line-height:15px;letter-spacing:-0.650px;white-space:pre;color:#a6a6a6;">Raw</div><div style="position:absolute;left:173.90px;top:698.30px;font-family:'Liberation Sans', sans-serif;font-size:15px;font-weight:400;line-height:15px;letter-spacing:0.333px;white-space:pre;color:#a6a6a6;">Preview</div><div style="position:absolute;left:261px;top:686px;width:89px;height:38px;background:#f0f0f0;border-radius:3px"></div><div style="position:absolute;left:272.80px;top:698.10px;font-family:'Liberation Sans', sans-serif;font-size:15px;font-weight:400;line-height:15px;letter-spacing:-1.133px;white-space:pre;color:#707070;">JSON</div><svg style="position:absolute;left:322px;top:700px" width="16" height="10" viewBox="0 0 16 10"><path d="M1.2 1.2 L8 8.4 L14.8 1.2" stroke="#aaa" stroke-width="2" fill="none"/></svg><div style="position:absolute;left:363px;top:686px;width:37px;height:38px;background:#f0f0f0;border-radius:3px"></div><svg style="position:absolute;left:369px;top:693px" width="24" height="22" viewBox="0 0 24 22"><path d="M2 3 H22" stroke="#f37021" stroke-width="2.2"/><path d="M2 10.8 H18 C23.5 10.8 23.5 18.6 18 18.6 H14" stroke="#f37021" stroke-width="2.2" fill="none"/><path d="M2 18.6 H9.2" stroke="#f37021" stroke-width="2.2"/><path d="M15.6 15.2 L11.8 18.6 L15.6 22" fill="#f37021"/></svg><svg style="position:absolute;left:1295px;top:693px" width="23" height="24" viewBox="0 0 23 24"><path d="M1.8 17.6 V1.8 H15.8 V4.6" stroke="#aaa" stroke-width="1.8" fill="none"/><rect x="7" y="5.4" width="14.6" height="16.8" stroke="#aaa" stroke-width="1.8" fill="none"/></svg><svg style="position:absolute;left:1331px;top:693px" width="25" height="24" viewBox="0 0 25 24"><circle cx="10" cy="10" r="7.7" stroke="#aaa" stroke-width="2.6" fill="none"/><path d="M15.5 15.5 L22.3 22.2" stroke="#aaa" stroke-width="3.2"/></svg><div style="position:absolute;left:1367px;top:686px;width:130px;height:38px;background:#f0f0f0;border-radius:3px"></div><div style="position:absolute;left:1379.60px;top:698.40px;font-family:'Liberation Sans', sans-serif;font-size:15px;font-weight:400;line-height:15px;letter-spacing:-0.117px;white-space:pre;color:#707070;">Save Response</div><div style="position:absolute;left:9px;top:737px;width:1488px;height:180px;box-sizing:border-box;border:1px solid #dcdcdc;border-radius:3px;background:#fff;overflow:hidden"></div><div style="position:absolute;left:10px;top:738px;width:50px;height:178px;background:#ebebeb;border-radius:2px 0 0 2px"></div><div style="position:absolute;left:10px;top:774px;width:50px;height:18px;background:#dadada"></div><div style="position:absolute;left:60px;top:774px;width:1436px;height:18px;background:#e8f2fe"></div><div style="position:absolute;left:3.50px;top:740.00px;width:40px;text-align:right;font-family:'Liberation Mono', monospace;font-size:13.75px;line-height:18px;color:#777">1</div><div style="position:absolute;left:64.50px;top:740.00px;height:18px;width:1400px;font-family:'Liberation Mono', monospace;font-size:13.75px;line-height:18px;white-space:pre"><span style="position:absolute;left:0.00px;top:0;color:#333333">{</span></div><div style="position:absolute;left:3.50px;top:758.00px;width:40px;text-align:right;font-family:'Liberation Mono', monospace;font-size:13.75px;line-height:18px;color:#777">2</div><div style="position:absolute;left:64.50px;top:758.00px;height:18px;width:1400px;font-family:'Liberation Mono', monospace;font-size:13.75px;line-height:18px;white-space:pre"><span style="position:absolute;left:33.00px;top:0;color:#850c5a">&quot;</span><span style="position:absolute;left:41.25px;top:0;color:#850c5a">c</span><span style="position:absolute;left:49.50px;top:0;color:#850c5a">o</span><span style="position:absolute;left:57.75px;top:0;color:#850c5a">d</span><span style="position:absolute;left:66.00px;top:0;color:#850c5a">e</span><span style="position:absolute;left:74.25px;top:0;color:#850c5a">&quot;</span><span style="position:absolute;left:82.50px;top:0;color:#333333">:</span><span style="position:absolute;left:99.00px;top:0;color:#1f1f9a">4</span><span style="position:absolute;left:107.25px;top:0;color:#1f1f9a">0</span><span style="position:absolute;left:115.50px;top:0;color:#1f1f9a">0</span><span style="position:absolute;left:123.75px;top:0;color:#333333">,</span></div><div style="position:absolute;left:3.50px;top:776.00px;width:40px;text-align:right;font-family:'Liberation Mono', monospace;font-size:13.75px;line-height:18px;color:#777">3</div><div style="position:absolute;left:64.50px;top:776.00px;height:18px;width:1400px;font-family:'Liberation Mono', monospace;font-size:13.75px;line-height:18px;white-space:pre"><span style="position:absolute;left:33.00px;top:0;color:#850c5a">&quot;</span><span style="position:absolute;left:41.25px;top:0;color:#850c5a">m</span><span style="position:absolute;left:49.50px;top:0;color:#850c5a">s</span><span style="position:absolute;left:57.75px;top:0;color:#850c5a">g</span><span style="position:absolute;left:66.00px;top:0;color:#850c5a">&quot;</span><span style="position:absolute;left:74.25px;top:0;color:#333333">:</span><span style="position:absolute;left:90.75px;top:0;color:#1f1ff5">&quot;</span><span style="position:absolute;left:99.00px;top:-1px;width:16.50px;text-align:center;color:#1f1ff5;font-size:15px">需</span><span style="position:absolute;left:115.50px;top:-1px;width:16.50px;text-align:center;color:#1f1ff5;font-size:15px">求</span><span style="position:absolute;left:132.00px;top:-1px;width:16.50px;text-align:center;color:#1f1ff5;font-size:15px">源</span><span style="position:absolute;left:148.50px;top:-1px;width:16.50px;text-align:center;color:#1f1ff5;font-size:15px">不</span><span style="position:absolute;left:165.00px;top:-1px;width:16.50px;text-align:center;color:#1f1ff5;font-size:15px">能</span><span style="position:absolute;left:181.50px;top:-1px;width:16.50px;text-align:center;color:#1f1ff5;font-size:15px">为</span><span style="position:absolute;left:198.00px;top:-1px;width:16.50px;text-align:center;color:#1f1ff5;font-size:15px">空</span><span style="position:absolute;left:214.50px;top:0;color:#1f1ff5">&quot;</span><span style="position:absolute;left:222.75px;top:0;color:#333333">,</span></div><div style="position:absolute;left:3.50px;top:794.00px;width:40px;text-align:right;font-family:'Liberation Mono', monospace;font-size:13.75px;line-height:18px;color:#777">4</div><div style="position:absolute;left:64.50px;top:794.00px;height:18px;width:1400px;font-family:'Liberation Mono', monospace;font-size:13.75px;line-height:18px;white-space:pre"><span style="position:absolute;left:33.00px;top:0;color:#850c5a">&quot;</span><span style="position:absolute;left:41.25px;top:0;color:#850c5a">d</span><span style="position:absolute;left:49.50px;top:0;color:#850c5a">a</span><span style="position:absolute;left:57.75px;top:0;color:#850c5a">t</span><span style="position:absolute;left:66.00px;top:0;color:#850c5a">a</span><span style="position:absolute;left:74.25px;top:0;color:#850c5a">&quot;</span><span style="position:absolute;left:82.50px;top:0;color:#333333">:</span><span style="position:absolute;left:99.00px;top:0;color:#222222">n</span><span style="position:absolute;left:107.25px;top:0;color:#222222">u</span><span style="position:absolute;left:115.50px;top:0;color:#222222">l</span><span style="position:absolute;left:123.75px;top:0;color:#222222">l</span></div><div style="position:absolute;left:3.50px;top:812.00px;width:40px;text-align:right;font-family:'Liberation Mono', monospace;font-size:13.75px;line-height:18px;color:#777">5</div><div style="position:absolute;left:64.50px;top:812.00px;height:18px;width:1400px;font-family:'Liberation Mono', monospace;font-size:13.75px;line-height:18px;white-space:pre"><span style="position:absolute;left:0.00px;top:0;color:#333333">}</span></div><svg style="position:absolute;left:49px;top:744.5px" width="7" height="5" viewBox="0 0 7 5"><path d="M0 0H7L3.5 4.5Z" fill="#777"/></svg><div style="position:absolute;left:246.2px;top:774px;width:1.3px;height:18px;background:#b0b0b0"></div><div style="position:absolute;left:1505px;top:920px;width:18px;height:22px;background:#1d2029"></div><div style="position:absolute;left:0px;top:903px;width:1523px;height:1px;background:#d6d6d6"></div><div style="position:absolute;left:0px;top:904px;width:1523px;height:36px;background:#fff;border-radius:0 0 8px 0"></div><div style="position:absolute;left:1271.60px;top:916.74px;font-family:'Liberation Sans', sans-serif;font-size:12px;font-weight:400;line-height:12px;letter-spacing:0.275px;white-space:pre;color:#555555;">BUILD</div><svg style="position:absolute;left:1316px;top:918px" width="11" height="9" viewBox="0 0 11 9"><path d="M0 0H10.5L5.25 9Z" fill="#555"/></svg><svg style="position:absolute;left:1355px;top:911px" width="18" height="22" viewBox="0 0 18 22"><path d="M4.8 13.8 C2.6 12.2 1.4 10 1.4 7.7 C1.4 3.8 4.7 1 8.7 1 C12.7 1 16 3.8 16 7.7 C16 10 14.8 12.2 12.6 13.8 L12 16.5 H5.4 Z" stroke="#aaa" stroke-width="1.2" fill="none"/><path d="M5.4 16.8 H12 L11 20 C10 21.2 7.4 21.2 6.4 20 Z" fill="#b8b8b8"/></svg><svg style="position:absolute;left:1401px;top:911px" width="22" height="22" viewBox="0 0 22 22"><rect x="1.5" y="1.5" width="19" height="19.5" stroke="#aaa" stroke-width="1.3" fill="none"/><path d="M11 1.5 V21" stroke="#aaa" stroke-width="1.3"/></svg><svg style="position:absolute;left:1446px;top:915px" width="22" height="14" viewBox="0 0 22 14"><rect x="1.5" y="1.2" width="19" height="11.4" rx="1.6" stroke="#aaa" stroke-width="1.1" fill="none"/><rect x="3.30" y="3.2" width="1.8" height="1.8" fill="#aaa"/><rect x="6.70" y="3.2" width="1.8" height="1.8" fill="#aaa"/><rect x="10.10" y="3.2" width="1.8" height="1.8" fill="#aaa"/><rect x="13.50" y="3.2" width="1.8" height="1.8" fill="#aaa"/><rect x="16.90" y="3.2" width="1.8" height="1.8" fill="#aaa"/><rect x="5.10" y="6" width="1.8" height="1.8" fill="#aaa"/><rect x="8.50" y="6" width="1.8" height="1.8" fill="#aaa"/><rect x="11.90" y="6" width="1.8" height="1.8" fill="#aaa"/><rect x="15.30" y="6" width="1.8" height="1.8" fill="#aaa"/><rect x="3.3" y="9" width="1.8" height="1.8" fill="#aaa"/><rect x="7.2" y="9" width="9.8" height="1.8" fill="#aaa"/><rect x="16.9" y="9" width="1.8" height="1.8" fill="#aaa"/></svg><svg style="position:absolute;left:1491px;top:911px" width="22" height="22" viewBox="0 0 22 22"><circle cx="11" cy="11" r="9.7" stroke="#aaa" stroke-width="1.2" fill="none"/><path d="M7.6 8.2 C7.6 5.8 9.2 4.8 11 4.8 C13 4.8 14.4 6 14.4 7.8 C14.4 10.2 11.2 10.6 11.2 13.4 V14.2" stroke="#aaa" stroke-width="1.4" fill="none"/><rect x="10.4" y="15.8" width="1.6" height="1.6" fill="#aaa"/></svg><div style="position:absolute;left:0px;top:940px;width:1528px;height:2px;background:#a4a4a4"></div><div style="position:absolute;left:0px;top:940px;width:31px;height:2px;background:#1d2029"></div><div style="position:absolute;left:1456px;top:940px;width:72px;height:2px;background:#1d2029"></div>
</body></html>
